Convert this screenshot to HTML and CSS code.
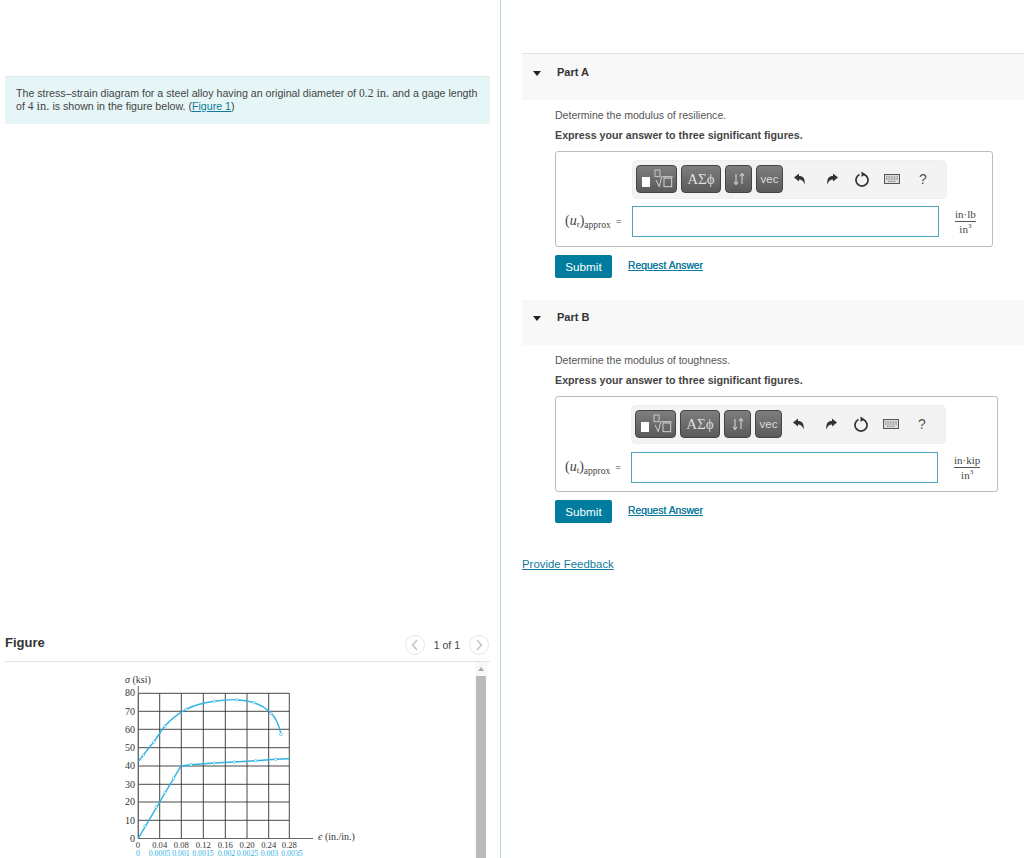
FILE: index.html
```html
<!DOCTYPE html>
<html lang="en">
<head>
<meta charset="utf-8">
<title>Stress-strain problem</title>
<link rel="stylesheet" href="styles.css">
</head>
<body>
<div class="page">
  <section class="left">
    <div class="intro">
      <p>The stress–strain diagram for a steel alloy having an original diameter of <span class="num">0.2</span> <span class="math">in.</span> and a gage length of <span class="num">4</span> <span class="math">in.</span> is shown in the figure below. (<a href="#">Figure 1</a>)</p>
    </div>
    <div class="fig-head">
      <h2>Figure</h2>
      <div class="pager">
        <span class="pg-btn"><svg viewBox="0 0 20 20" width="20" height="20"><path d="M12 5 L7.5 10 L12 15" fill="none" stroke="#c4c4c4" stroke-width="1.6"/></svg></span>
        <span class="pg-text">1 of 1</span>
        <span class="pg-btn"><svg viewBox="0 0 20 20" width="20" height="20"><path d="M8 5 L12.5 10 L8 15" fill="none" stroke="#c4c4c4" stroke-width="1.6"/></svg></span>
      </div>
    </div>
    <div class="fig-pane">
      <div class="fig-body">
        <svg class="graph" viewBox="0 0 250 193" width="250" height="193">
          <g class="grid">
            <path d="M18.3 28.3V173.5M39.7 28.3V173.5M61.3 28.3V173.5M83.3 28.3V173.5M105.3 28.3V173.5M127 28.3V173.5M148.7 28.3V173.5M169.3 28.3V173.5"/>
            <path d="M18.3 28.3H169.3M18.3 46.3H169.3M18.3 64.3H169.3M18.3 82.7H169.3M18.3 101H169.3M18.3 119.3H169.3M18.3 137H169.3M18.3 155.3H169.3"/>
          </g>
          <path class="axis" d="M18.3 21V173.5H193"/>
          <g class="curve">
            <path d="M18.3 173.3L61 101L71 99.7L94.3 98L114.3 97L135.7 95.7L155.7 94.3L169.3 93.7"/>
            <path d="M18.3 96.7L23.3 90L34 76.7C38 71 41 66 45 61C50 55 56 50 66 44.3C75 40 85 37.5 94.3 36.3C102 35 110 34.5 116.7 34.7C124 35 129 36 134 37.7C141 40 147 44 151 48.3C155 52 159 60 161 69.3"/>
            <g class="dots">
              <circle cx="25" cy="161" r="1.3"/><circle cx="36" cy="142.3" r="1.3"/><circle cx="45" cy="127.3" r="1.3"/><circle cx="53.7" cy="113.3" r="1.3"/>
              <circle cx="71" cy="99.7" r="1.3"/><circle cx="94.3" cy="98" r="1.3"/><circle cx="114.3" cy="97" r="1.3"/><circle cx="135.7" cy="95.7" r="1.3"/><circle cx="155.7" cy="94.3" r="1.3"/>
              <circle cx="23.3" cy="90" r="1.3"/><circle cx="34" cy="76.7" r="1.3"/><circle cx="45" cy="61" r="1.3"/><circle cx="66" cy="44.3" r="1.3"/><circle cx="94.3" cy="36.3" r="1.3"/><circle cx="116.7" cy="34.7" r="1.3"/><circle cx="134" cy="37.7" r="1.3"/><circle cx="151" cy="48.3" r="1.3"/><circle cx="161" cy="69.3" r="1.5"/>
            </g>
          </g>
          <text class="lbl" x="5" y="17.5"><tspan class="it">σ</tspan> (ksi)</text>
          <g class="ticks-y">
            <text x="15" y="30.5">80</text><text x="15" y="49.5">70</text><text x="15" y="67.5">60</text><text x="15" y="86">50</text><text x="15" y="104">40</text><text x="15" y="122.5">30</text><text x="15" y="140">20</text><text x="15" y="158.5">10</text><text x="15" y="176.5">0</text>
          </g>
          <g class="ticks-x">
            <text x="18" y="183">0</text><text x="39.7" y="183">0.04</text><text x="61.3" y="183">0.08</text><text x="83.3" y="183">0.12</text><text x="105.3" y="183">0.16</text><text x="127" y="183">0.20</text><text x="148.7" y="183">0.24</text><text x="169.3" y="183">0.28</text>
          </g>
          <g class="ticks-b">
            <text x="18" y="191">0</text><text x="39.5" y="191">0.0005</text><text x="61" y="191">0.001</text><text x="83" y="191">0.0015</text><text x="106.5" y="191">0.002</text><text x="127.5" y="191">0.0025</text><text x="149.5" y="191">0.003</text><text x="172" y="191">0.0035</text>
          </g>
          <text class="lbl" x="198" y="175"><tspan class="it">є</tspan> (in./in.)</text>
        </svg>
      </div>
      <div class="scrollbar"><span class="sb-arrow"></span><span class="sb-thumb"></span></div>
    </div>
  </section>

  <section class="right">
    <div class="part-head part-head-first"><span class="caret"></span><h3>Part A</h3></div>
    <div class="part-body">
      <p class="q">Determine the modulus of resilience.</p>
      <p class="inst">Express your answer to three significant figures.</p>
      <div class="box box-a">
        <div class="toolbar">
          <span class="tb tb-root"><svg viewBox="0 0 41 28" width="41" height="28"><rect x="6" y="12" width="8" height="10" fill="#fff"/><rect x="19" y="5" width="5" height="6.7" fill="none" stroke="#ddd" stroke-width="0.8"/><path d="M20 15L23.3 21.7L25.7 11.7H36.7" fill="none" stroke="#ddd" stroke-width="0.9"/><rect x="28" y="13" width="7.7" height="8.7" fill="none" stroke="#ddd" stroke-width="0.9"/></svg></span>
          <span class="tb tb-greek">ΑΣϕ</span>
          <span class="tb tb-arrows"><svg viewBox="0 0 14 14" width="14" height="14"><path d="M4 2V12M2 9.8L4 12.8L6 9.8M10 12V2M8 4.2L10 1.2L12 4.2" fill="none" stroke="#ddd" stroke-width="1"/></svg></span>
          <span class="tb tb-vec">vec</span>
          <span class="ic ic-undo"><svg viewBox="0 0 14 14" width="14" height="14"><path d="M1 5.5L6 1.5V4C10 4 12.5 6.5 11.5 12.5C10.5 9 9 7.5 6 7.5V9.5Z" fill="#333"/></svg></span>
          <span class="ic ic-redo"><svg viewBox="0 0 14 14" width="14" height="14"><path d="M13 5.5L8 1.5V4C4 4 1.5 6.5 2.5 12.5C3.5 9 5 7.5 8 7.5V9.5Z" fill="#333"/></svg></span>
          <span class="ic"><svg viewBox="0 0 16 16" width="16" height="16"><path d="M5.5 3.6A6 6 0 1 0 10 3.4" fill="none" stroke="#333" stroke-width="1.7"/><path d="M7.5 0.5V6L11.5 3.2Z" fill="#333"/></svg></span>
          <span class="ic"><svg viewBox="0 0 16 10" width="16" height="10"><rect x="0.5" y="0.5" width="15" height="9" fill="#ddd" stroke="#555"/><path d="M2 3H14M2 5H14M4 7.3H12" stroke="#777" stroke-dasharray="1 0.6"/></svg></span>
          <span class="ic ic-help">?</span>
        </div>
        <div class="ans-row">
          <span class="ans-label"><span class="m">(<i>u</i><span class="msub">r</span>)</span><span class="sub">approx</span><span class="eq">=</span></span>
          <span class="ans-input"></span>
          <span class="frac"><span class="top">in·lb</span><span class="bot">in<sup>3</sup></span></span>
        </div>
      </div>
      <div class="actions"><button class="submit" type="button">Submit</button><a class="req" href="#">Request Answer</a></div>
    </div>

    <div class="part-head part-head-second"><span class="caret"></span><h3>Part B</h3></div>
    <div class="part-body">
      <p class="q">Determine the modulus of toughness.</p>
      <p class="inst">Express your answer to three significant figures.</p>
      <div class="box box-b">
        <div class="toolbar">
          <span class="tb tb-root"><svg viewBox="0 0 41 28" width="41" height="28"><rect x="6" y="12" width="8" height="10" fill="#fff"/><rect x="19" y="5" width="5" height="6.7" fill="none" stroke="#ddd" stroke-width="0.8"/><path d="M20 15L23.3 21.7L25.7 11.7H36.7" fill="none" stroke="#ddd" stroke-width="0.9"/><rect x="28" y="13" width="7.7" height="8.7" fill="none" stroke="#ddd" stroke-width="0.9"/></svg></span>
          <span class="tb tb-greek">ΑΣϕ</span>
          <span class="tb tb-arrows"><svg viewBox="0 0 14 14" width="14" height="14"><path d="M4 2V12M2 9.8L4 12.8L6 9.8M10 12V2M8 4.2L10 1.2L12 4.2" fill="none" stroke="#ddd" stroke-width="1"/></svg></span>
          <span class="tb tb-vec">vec</span>
          <span class="ic ic-undo"><svg viewBox="0 0 14 14" width="14" height="14"><path d="M1 5.5L6 1.5V4C10 4 12.5 6.5 11.5 12.5C10.5 9 9 7.5 6 7.5V9.5Z" fill="#333"/></svg></span>
          <span class="ic ic-redo"><svg viewBox="0 0 14 14" width="14" height="14"><path d="M13 5.5L8 1.5V4C4 4 1.5 6.5 2.5 12.5C3.5 9 5 7.5 8 7.5V9.5Z" fill="#333"/></svg></span>
          <span class="ic"><svg viewBox="0 0 16 16" width="16" height="16"><path d="M5.5 3.6A6 6 0 1 0 10 3.4" fill="none" stroke="#333" stroke-width="1.7"/><path d="M7.5 0.5V6L11.5 3.2Z" fill="#333"/></svg></span>
          <span class="ic"><svg viewBox="0 0 16 10" width="16" height="10"><rect x="0.5" y="0.5" width="15" height="9" fill="#ddd" stroke="#555"/><path d="M2 3H14M2 5H14M4 7.3H12" stroke="#777" stroke-dasharray="1 0.6"/></svg></span>
          <span class="ic ic-help">?</span>
        </div>
        <div class="ans-row">
          <span class="ans-label"><span class="m">(<i>u</i><span class="msub">t</span>)</span><span class="sub">approx</span><span class="eq">=</span></span>
          <span class="ans-input"></span>
          <span class="frac"><span class="top">in·kip</span><span class="bot">in<sup>3</sup></span></span>
        </div>
      </div>
      <div class="actions actions-b"><button class="submit" type="button">Submit</button><a class="req" href="#">Request Answer</a></div>
    </div>
    <a class="feedback" href="#">Provide Feedback</a>
  </section>
</div>
</body>
</html>
```
FILE: styles.css
```css
* { box-sizing: border-box; }
html, body { margin: 0; padding: 0; background: #fff; }
body { font-family: "Liberation Sans", Arial, sans-serif; color: #333; overflow: hidden; }
.page { display: flex; width: 1024px; height: 858px; overflow: hidden; }
a { color: #0f7a9c; }

/* left column */
.left { width: 501px; height: 858px; border-right: 1px solid #b9d3e6; padding: 76px 10px 0 5px; display: flex; flex-direction: column; flex: none; }
.intro { height: 48px; background: #e6f6f7; border-top: 1px solid #dbe9ea; padding: 10px 11px 0; }
.intro p { margin: 0; font-size: 10.65px; line-height: 13px; color: #444; }
.num { font-family: "Liberation Serif", serif; font-size: 11.5px; }
.math { font-family: "Liberation Serif", serif; font-size: 12.5px; color: #444; }
.fig-head { margin-top: 507px; height: 31px; display: flex; justify-content: space-between; align-items: flex-start; border-bottom: 1px solid #e4e4e4; padding-right: 1px; }
.fig-head h2 { margin: 4px 0 0; font-size: 13px; line-height: 16px; font-weight: bold; color: #333; }
.pager { display: flex; align-items: center; gap: 8px; margin-top: 4px; }
.pg-btn { width: 20px; height: 20px; border: 1px solid #e6e6e6; border-radius: 50%; display: flex; align-items: center; justify-content: center; background: #fff; }
.pg-btn svg { flex: none; }
.pg-text { font-size: 10.5px; color: #444; margin: 0 1px; }
.fig-pane { flex: 1; display: flex; min-height: 0; overflow: hidden; }
.fig-body { flex: 1; padding-left: 115px; padding-top: 3px; }
.graph { display: block; }
.grid path { fill: none; stroke: #333; stroke-width: 0.9; }
.axis { fill: none; stroke: #666; stroke-width: 1; }
.curve path { fill: none; stroke: #2db4e4; stroke-width: 1.4; }
.dots circle { fill: #fff; stroke: #2db4e4; stroke-width: 0.6; }
.graph text { font-family: "Liberation Serif", serif; fill: #333; }
.lbl { font-size: 10px; }
.it { font-style: italic; }
.ticks-y text { font-size: 10px; text-anchor: end; }
.ticks-x text { font-size: 8.6px; text-anchor: middle; }
.graph .ticks-b text { font-size: 7.8px; text-anchor: middle; fill: #2db4e4; }
.scrollbar { width: 12px; flex: none; margin-right: 3px; display: flex; flex-direction: column; align-items: center; background: #f8f8f8; }
.sb-arrow { margin-top: 5px; width: 0; height: 0; border-left: 3px solid transparent; border-right: 3px solid transparent; border-bottom: 4px solid #aaa; }
.sb-thumb { margin-top: 5px; width: 10px; flex: 1; background: #bababa; }

/* right column */
.right { flex: 1; padding: 53px 0 0 21px; min-width: 0; }
.part-head { background: #f8f8f8; display: flex; align-items: flex-start; padding-left: 11px; }
.part-head-first { height: 47px; border-top: 1px solid #e2e2e2; padding-top: 12px; }
.part-head-second { height: 45px; margin-top: 22px; padding-top: 11px; }
.caret { width: 0; height: 0; border-left: 4.5px solid transparent; border-right: 4.5px solid transparent; border-top: 5px solid #222; margin: 5px 16px 0 0; }
.part-head h3 { margin: 0; font-size: 11px; line-height: 13px; font-weight: bold; color: #333; }
.part-body { padding-left: 33px; }
.q { margin: 0; padding-top: 9px; height: 26px; font-size: 10.55px; line-height: 13px; color: #555; }
.inst { margin: 0; height: 25px; font-size: 10.7px; line-height: 19px; font-weight: bold; color: #444; }
.box { height: 96px; border: 1px solid #bdbdbd; border-radius: 3px; padding: 8px 0 0; }
.box-a { width: 438px; }
.box-b { width: 443px; }
.toolbar { width: 315px; height: 39px; background: #f3f3f3; border: 1px solid #efefef; border-radius: 5px; margin-left: 76px; display: flex; align-items: center; padding: 0 0 1px 3px; }
.box-b .toolbar { margin-left: 75px; }
.tb { height: 28px; border: 1px solid #444; border-radius: 4px; background: linear-gradient(#7e7e7e, #5a5a5a); color: #ddd; display: flex; align-items: center; justify-content: center; margin-right: 4px; flex: none; }
.tb svg { flex: none; }
.tb-root { width: 41px; }
.tb-greek { width: 40px; font-family: "Liberation Serif", serif; font-size: 15px; }
.tb-arrows { width: 27px; }
.tb-vec { width: 27px; font-size: 11.5px; margin-right: 2px; }
.ic { width: 30px; display: flex; justify-content: center; align-items: center; flex: none; }
.ic-undo { margin-right: 2px; }
.ic-help { font-size: 14px; color: #555; padding-left: 2px; }
.ans-row { display: flex; align-items: center; margin-top: 7px; height: 31px; }
.box-b .ans-row { margin-top: 8px; }
.ans-label { width: 76px; padding-left: 9px; font-family: "Liberation Serif", serif; font-size: 11px; color: #444; white-space: nowrap; flex: none; position: relative; top: -1px; }
.box-b .ans-label { width: 75px; }
.ans-label .sub { font-size: 9.5px; position: relative; top: 3px; margin-left: 0; }
.eq { font-size: 10px; margin-left: 5px; }
.m { font-size: 14px; }
.msub { font-size: 9px; position: relative; top: 2px; }
.ans-input { width: 307px; height: 31px; border: 1px solid #4fa3bf; background: #fff; flex: none; }
.frac { margin-left: 16px; display: flex; flex-direction: column; align-items: center; font-family: "Liberation Serif", serif; font-size: 11px; color: #444; line-height: 12px; }
.frac .top { border-bottom: 1px solid #555; padding: 0 0 1px; }
.frac .bot { padding-top: 1px; }
.frac sup { font-size: 7px; line-height: 0; }
.actions { display: flex; align-items: center; margin-top: 8px; height: 23px; }
.submit { width: 57px; height: 23px; background: #007c9e; border: 0; border-radius: 2px; color: #fff; font: 11.7px "Liberation Sans", sans-serif; padding: 0 0 1px; }
.req { margin-left: 16px; font-size: 10.3px; position: relative; top: -1px; text-shadow: 0 0 0.6px #0f7a9c; }
.feedback { display: block; margin-top: 34px; font-size: 11.4px; line-height: 14px; }
```
